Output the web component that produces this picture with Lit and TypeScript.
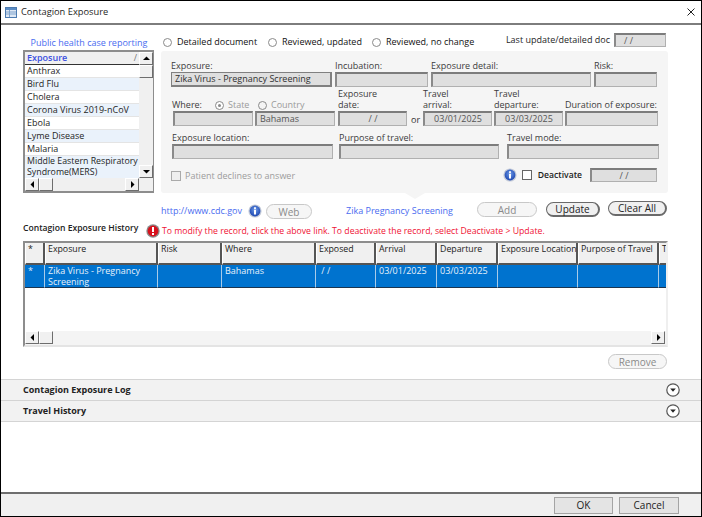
import { LitElement, html, css, svg } from 'lit';
import { customElement } from 'lit/decorators.js';

const conditions = ['Anthrax', 'Bird Flu', 'Cholera', 'Corona Virus 2019-nCoV', 'Ebola', 'Lyme Disease', 'Malaria', 'Middle Eastern Respiratory Syndrome(MERS)'];

const columns = [
  ['*', '*'],
  ['Exposure', 'Zika Virus - Pregnancy Screening'],
  ['Risk', ''],
  ['Where', 'Bahamas'],
  ['Exposed', '\u00a0/ /'],
  ['Arrival', '03/01/2025'],
  ['Departure', '03/03/2025'],
  ['Exposure Location', ''],
  ['Purpose of Travel', ''],
  ['T', ''],
];

const infoIcon = html`<svg class="round-icon" viewBox="0 0 14 14">
  <defs><radialGradient id="ib" cx="50%" cy="40%" r="60%"><stop offset="0" stop-color="#6f9be8"/><stop offset="1" stop-color="#1c46b0"/></radialGradient></defs>
  <circle cx="7" cy="7" r="6.600" fill="#c3cad8"/><circle cx="7" cy="7" r="5.400" fill="url(#ib)"/>
  <rect x="6" y="5.700" width="2" height="4.800" fill="#fff"/><rect x="6" y="3.300" width="2" height="1.600" fill="#fff"/>
</svg>`;

const alertIcon = html`<svg class="round-icon" viewBox="0 0 14 14">
  <circle cx="7" cy="7" r="6.700" fill="#8b8b8b"/><circle cx="7" cy="7" r="5.400" fill="#d8111c"/>
  <rect x="6" y="3" width="2" height="5" fill="#fff"/><rect x="6" y="9" width="2" height="2" fill="#fff"/>
</svg>`;

const expandIcon = html`<svg class="round-icon" viewBox="0 0 14 14">
  <circle cx="7" cy="7" r="6.200" fill="#fff" stroke="#555" stroke-width="1.200"/>
  <path d="M4.200 5.600h5.600L7 8.800z" fill="#222"/>
</svg>`;

const arrow = (d: string) => svg`<svg class="arrow" viewBox="0 0 7 7"><path d=${d} fill="#000"/></svg>`;
const UP = 'M0 5h7L3.500 1.500z';
const DOWN = 'M0 2h7L3.500 5.500z';
const LEFT = 'M5 0v7L1.500 3.500z';
const RIGHT = 'M2 0v7L5.500 3.500z';

@customElement('app-root')
export class AppRoot extends LitElement {
  static styles = css`
    :host {
      display: block;
      width: 702px;
      height: 517px;
      font-family: "Open Sans", "Noto Sans", sans-serif;
      font-size: 9px;
      line-height: 12px;
      color: #1e1e1e;
    }
    * { box-sizing: border-box; }

    .window {
      width: 702px;
      height: 517px;
      display: flex;
      flex-direction: column;
      background: #fff;
      border: 1px solid #000;
    }

    .titlebar {
      height: 24px;
      flex: none;
      display: flex;
      align-items: center;
      padding: 0 6px 0 4px;
      gap: 4px;
      border-bottom: 2px solid #7d7d7d;
      font-size: 9.300px;
    }
    .app-icon { width: 12px; height: 11px; }
    .close { width: 8px; height: 8px; margin-left: auto; }

    .content {
      flex: 1;
      padding: 8px 33px 0 22px;
      display: flex;
      flex-direction: column;
    }

    .top { display: grid; grid-template-columns: 131px 507px; column-gap: 7px; }
    .case-link { color: #4a6cf0; text-align: center; padding: 4px 0 0 1px; height: 17px; white-space: nowrap; }

    .options { display: flex; align-items: center; height: 18px; padding: 0 2px; }
    .option { display: flex; align-items: center; gap: 5px; white-space: nowrap; color: #111; }
    .option.a { width: 105px; }
    .option.b { width: 104px; }
    .last { margin-left: auto; display: flex; align-items: center; gap: 4px; padding-bottom: 4px; white-space: nowrap; }
    .last .input { width: 52px; height: 14px; padding-left: 8px; }

    .radio {
      width: 9px;
      height: 9px;
      border-radius: 50%;
      background: #fff;
      border: 1px solid #8a8a8a;
      flex: none;
      display: inline-flex;
      align-items: center;
      justify-content: center;
    }
    .radio.on::after { content: ""; width: 3px; height: 3px; border-radius: 50%; background: #8a8a8a; }
    .radio.off { background: #f4f4f4; }

    .list {
      height: 143px;
      border: 2px solid #8d8d8d;
      border-right-width: 1px;
      display: grid;
      grid-template-columns: 114px 14px;
      grid-template-rows: 1fr 13px;
      background: #f0f0f0;
    }
    .list-body { overflow: hidden; }
    .list-head {
      height: 13px;
      padding: 0 2px;
      display: flex;
      justify-content: space-between;
      background: #f0f0f0;
      border-bottom: 1px solid #333;
      color: #3b4fe0;
      font-weight: 600;
    }
    .list-head span:last-child { color: #777; font-weight: 400; }
    .list-row { padding: 0 2px; height: 13px; background: #fff; white-space: nowrap; border-bottom: 1px solid #e4e4e4; }
    .list-row:nth-child(odd) { background: #eaf2fb; }
    .list-row.tall { height: 22px; line-height: 10.500px; white-space: normal; border: none; padding-right: 0; font-size: 8.800px; }

    .vbar { display: flex; flex-direction: column; justify-content: space-between; background: #f0f0f0; }
    .hbar { display: flex; justify-content: space-between; background: #f0f0f0; }
    .bevel {
      width: 14px;
      height: 13px;
      flex: none;
      background: #f0f0f0;
      border: 1px solid;
      border-color: #fff #6d6d6d #6d6d6d #fff;
      display: flex;
      align-items: center;
      justify-content: center;
    }
    .arrow { width: 7px; height: 7px; }
    .thumb-stack { display: flex; flex-direction: column; }
    .thumb-row { display: flex; }
    .corner { background: #f0f0f0; }

    .panel {
      position: relative;
      height: 142px;
      background: #f5f5f5;
      border-radius: 3px;
      padding: 9px 10px 0 10px;
    }
    .panel::after {
      content: "";
      position: absolute;
      left: 244px;
      bottom: -6px;
      width: 0;
      height: 0;
      border-left: 10px solid transparent;
      border-right: 10px solid transparent;
      border-top: 6px solid #f5f5f5;
    }

    .field { display: flex; flex-direction: column; justify-content: flex-end; min-width: 0; }
    .field label { color: #3c3c3c; line-height: 11px; padding-bottom: 1px; white-space: nowrap; }
    .input {
      display: block;
      height: 15px;
      background: #dfdfdf;
      border-style: solid;
      border-width: 2px 1px 1px 2px;
      border-color: #7c7c7c #b0b0b0 #b0b0b0 #8a8a8a;
      color: #555;
      padding: 0 3px;
      line-height: 11px;
      white-space: nowrap;
      overflow: hidden;
    }
    .input.dark { color: #303030; border-width: 1px 2px 2px 1px; border-color: #808080; }
    .input.date { text-align: center; }

    .row { display: grid; align-items: end; }
    .r1 { grid-template-columns: 161px 93px 160px 63px; column-gap: 3px; height: 27px; }
    .r2 { grid-template-columns: 165px 69px 12px 69px 69px 93px; column-gap: 2px; height: 38px; margin-top: 1px; }
    .r3 { grid-template-columns: 161px 160px 152px; height: 27px; margin-top: 6px; column-gap: 6px; padding-left: 1px; }
    .r3 .field:nth-child(3) { margin-left: 2px; width: 152px; }
    .where-head { display: flex; align-items: center; padding: 0 0 1px 1px; height: 11px; color: #9a9a9a; white-space: nowrap; }
    .where-head .where { color: #3c3c3c; width: 43px; }
    .where-head .choice { display: flex; align-items: center; gap: 4px; width: 43px; }
    .where-inputs { display: grid; grid-template-columns: 80px 80px; gap: 2px; padding-left: 2px; }
    .or { padding: 0 0 0 2px; color: #333; }

    .r4 { display: flex; align-items: center; height: 17px; margin-top: 7px; }
    .check { width: 10px; height: 10px; flex: none; background: #fff; border: 1px solid #666; }
    .check.off { background: #efefef; border-color: #aaa; }
    .declines { display: flex; align-items: center; gap: 4px; color: #9c9c9c; margin-top: 3px; }
    .deactivate { margin-left: auto; display: flex; align-items: center; font-weight: 600; font-size: 8.600px; color: #222; }
    .deactivate .check { margin: 0 6px 0 5px; }
    .deactivate .input { width: 67px; margin: 0 1px 0 8px; height: 14px; font-weight: 400; font-size: 9px; }

    .round-icon { width: 14px; height: 14px; flex: none; display: block; }

    .actions { display: flex; align-items: flex-start; height: 28px; padding-left: 138px; }
    .link { color: #4a6cf0; white-space: nowrap; margin-top: 12px; }
    .cdc { width: 87px; }
    .info-slot { margin-top: 11px; }
    .pill {
      font: inherit;
      font-size: 10px;
      padding: 0;
      height: 15px;
      border-radius: 8px;
      background: #f0f0f0;
      border: 1px solid #6a6a6a;
      color: #222;
      display: flex;
      align-items: center;
      justify-content: center;
    }
    .pill.off { border-color: #c8c8c8; color: #8a8a8a; background: #f6f6f6; }
    .web { width: 46px; margin: 11px 0 0 4px; }
    .screening { margin-left: 34px; }
    .add { width: 60px; margin: 9px 0 0 auto; }
    .update { width: 54px; margin: 9px 0 0 9px; border-width: 1px 2px 2px 1px; }
    .clear { width: 59px; margin: 8px 1px 0 8px; border-width: 1px 2px 2px 1px; }

    .notice { display: flex; align-items: center; height: 15px; margin-top: 2px; white-space: nowrap; }
    .notice .history { font-weight: 600; font-size: 8.600px; width: 123px; color: #222; margin-top: -6px; }
    .notice .message { color: #ef1233; margin-left: 2px; margin-top: 1px; font-weight: 500; font-size: 8.700px; }

    .grid-box {
      height: 106px;
      margin-top: 3px;
      border: 2px solid #8d8d8d;
      border-right: 2px solid #efefef;
      border-bottom: 2px solid #e4e4e4;
      display: flex;
      flex-direction: column;
      background: #fff;
    }
    .grid-body { flex: 1; overflow: hidden; }
    .grid {
      display: grid;
      grid-template-columns: 20px 113px 64px 94px 60px 61px 61px 80px 81px 30px;
      grid-template-rows: 22px 23px;
    }
    .gh {
      background: #f0f0f0;
      border-right: 2px solid #555;
      border-left: 1px solid #fff;
      border-bottom: 2px solid #555;
      font-weight: 500;
      font-size: 8.800px;
      padding: 0 1px 0 2px;
      white-space: nowrap;
      overflow: hidden;
      color: #222;
    }
    .gc {
      background: #0073cf;
      color: #e8f1fa;
      padding: 1px 3px 0;
      line-height: 10.500px;
      border-right: 1px solid #a9cbe8;
      border-bottom: 1px solid #1b3550;
    }
    .grid-scroll { height: 14px; display: flex; justify-content: space-between; background: #f4f4f4; flex: none; padding-right: 1px; }

    .remove-row { display: flex; justify-content: flex-end; padding: 7px 1px 0 0; height: 32px; }
    .remove { width: 59px; }

    .band {
      height: 21px;
      flex: none;
      margin: 0 -33px 0 -22px;
      padding: 0 21px 1px 22px;
      background: #f2f2f2;
      border-bottom: 1px solid #d4d4d4;
      display: flex;
      align-items: center;
      justify-content: space-between;
      font-weight: 700;
      font-size: 9px;
      color: #222;
    }
    .band.first { height: 22px; border-top: 1px solid #d4d4d4; }

    .footer {
      height: 24px;
      flex: none;
      background: #f0f0f0;
      border-top: 2px solid #6e6e6e;
      display: flex;
      justify-content: flex-end;
      align-items: center;
      gap: 6px;
      padding-right: 22px;
    }
    .footer button {
      font: inherit;
      font-size: 10px;
      height: 17px;
      width: 59px;
      padding: 0;
      background: #e4e4e4;
      border: 1px solid #a4a4a4;
      color: #222;
    }
    .footer button + button { width: 60px; }
  `;

  private renderField(label: unknown, value = '', cls = '') {
    return html`<div class="field"><label>${label}</label><div class="input ${cls}">${value}</div></div>`;
  }

  private renderList() {
    return html`<div class="list">
      <div class="list-body">
        <div class="list-head"><span>Exposure</span><span>/</span></div>
        ${conditions.map((c, i) => html`<div class="list-row ${i === conditions.length - 1 ? 'tall' : ''}">${c}</div>`)}
      </div>
      <div class="vbar">
        <div class="thumb-stack"><div class="bevel">${arrow(UP)}</div><div class="bevel"></div></div>
        <div class="bevel">${arrow(DOWN)}</div>
      </div>
      <div class="hbar">
        <div class="thumb-row"><div class="bevel">${arrow(LEFT)}</div><div class="bevel"></div></div>
        <div class="bevel">${arrow(RIGHT)}</div>
      </div>
      <div class="corner"></div>
    </div>`;
  }

  private renderPanel() {
    return html`<div class="panel">
      <div class="row r1">
        ${this.renderField('Exposure:', 'Zika Virus - Pregnancy Screening', 'dark')}
        ${this.renderField('Incubation:')}
        ${this.renderField('Exposure detail:')}
        ${this.renderField('Risk:')}
      </div>
      <div class="row r2">
        <div class="field">
          <div class="where-head">
            <span class="where">Where:</span>
            <span class="choice"><i class="radio on"></i>State</span>
            <span class="choice"><i class="radio off"></i>Country</span>
          </div>
          <div class="where-inputs"><div class="input"></div><div class="input">Bahamas</div></div>
        </div>
        ${this.renderField(html`Exposure<br />date:`, '/ /', 'date')}
        <div class="or">or</div>
        ${this.renderField(html`Travel<br />arrival:`, '03/01/2025', 'date')}
        ${this.renderField(html`Travel<br />departure:`, '03/03/2025', 'date')}
        ${this.renderField('Duration of exposure:')}
      </div>
      <div class="row r3">
        ${this.renderField('Exposure location:')}
        ${this.renderField('Purpose of travel:')}
        ${this.renderField('Travel mode:')}
      </div>
      <div class="r4">
        <div class="declines"><i class="check off"></i>Patient declines to answer</div>
        <div class="deactivate">
          ${infoIcon}<i class="check"></i>Deactivate
          <div class="input date">/ /</div>
        </div>
      </div>
    </div>`;
  }

  render() {
    return html`<div class="window">
      <div class="titlebar">
        <svg class="app-icon" viewBox="0 0 12 11">
          <rect x="0.500" y="0.500" width="11" height="10" fill="#dfe8f4" stroke="#4d7bb0" />
          <rect x="1" y="1" width="10" height="2" fill="#5b8cc4" />
          <path d="M4.500 3v7M1 5h10M1 7h10" stroke="#7fa3cc" stroke-width="1" fill="none" />
        </svg>
        <span>Contagion Exposure</span>
        <svg class="close" viewBox="0 0 8 8"><path d="M0.500 0.500l7 7M7.500 0.500l-7 7" stroke="#222" stroke-width="1" fill="none" /></svg>
      </div>
      <div class="content">
        <div class="top">
          <div>
            <div class="case-link">Public health case reporting</div>
            ${this.renderList()}
          </div>
          <div>
            <div class="options">
              <span class="option a"><i class="radio"></i>Detailed document</span>
              <span class="option b"><i class="radio"></i>Reviewed, updated</span>
              <span class="option"><i class="radio"></i>Reviewed, no change</span>
              <span class="last">Last update/detailed doc <span class="input">/ /</span></span>
            </div>
            ${this.renderPanel()}
          </div>
        </div>

        <div class="actions">
          <span class="link cdc">http://www.cdc.gov</span>
          <span class="info-slot">${infoIcon}</span>
          <button class="pill off web">Web</button>
          <span class="link screening">Zika Pregnancy Screening</span>
          <button class="pill off add">Add</button>
          <button class="pill update">Update</button>
          <button class="pill clear">Clear All</button>
        </div>

        <div class="notice">
          <span class="history">Contagion Exposure History</span>
          ${alertIcon}
          <span class="message">To modify the record, click the above link. To deactivate the record, select Deactivate &gt; Update.</span>
        </div>

        <div class="grid-box">
          <div class="grid-body">
            <div class="grid">
              ${columns.map(c => html`<div class="gh">${c[0]}</div>`)}
              ${columns.map(c => html`<div class="gc">${c[1]}</div>`)}
            </div>
          </div>
          <div class="grid-scroll">
            <div class="thumb-row"><div class="bevel">${arrow(LEFT)}</div><div class="bevel"></div></div>
            <div class="bevel">${arrow(RIGHT)}</div>
          </div>
        </div>

        <div class="remove-row"><button class="pill off remove">Remove</button></div>

        <div class="band first">Contagion Exposure Log ${expandIcon}</div>
        <div class="band">Travel History ${expandIcon}</div>
      </div>
      <div class="footer"><button>OK</button><button>Cancel</button></div>
    </div>`;
  }
}
